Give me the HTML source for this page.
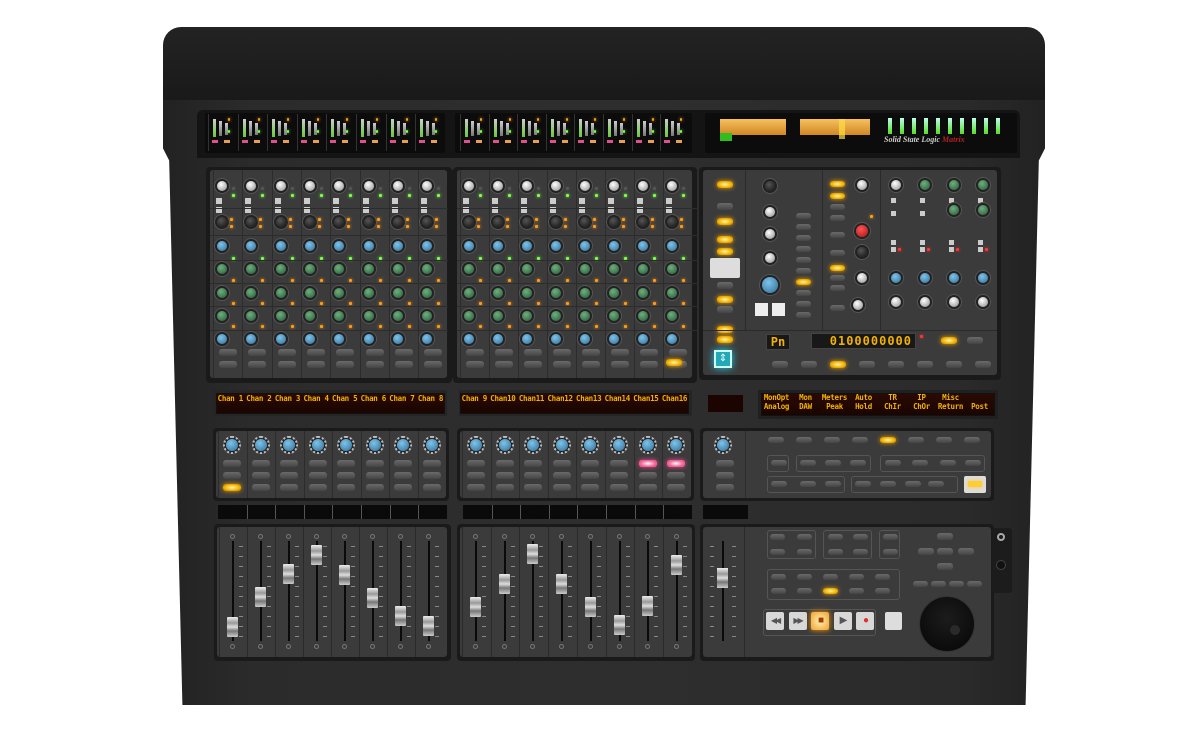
<!DOCTYPE html>
<html><head><meta charset="utf-8">
<style>
*{margin:0;padding:0;box-sizing:border-box}
body{width:1200px;height:741px;background:#fff;position:relative;overflow:hidden;font-family:"Liberation Sans",sans-serif}
.a{position:absolute}
#hood{left:163px;top:27px;width:882px;height:100px;background:linear-gradient(#232323,#1b1b1b 60%,#151515);border-radius:18px 18px 0 0}
#body{left:163px;top:100px;width:882px;height:605px;background:linear-gradient(90deg,#222,#2b2b2b 10%,#2e2e2e 50%,#2b2b2b 90%,#222);border-radius:0 0 8px 8px;clip-path:polygon(0 0,100% 0,100% 8%,99.3% 10%,97.8% 100%,2.2% 100%,0.7% 10%,0 8%)}
.panel{background:#1a1a1a;border-radius:4px}
.face{background:#3b3b3b;border-radius:3px}
.meterbox{background:#0c0c0c;border-radius:2px}
.disp{background:linear-gradient(#2a0a02,#1a0500);border:1px solid #111}
.dt{position:absolute;color:#f3b100;font-family:"DejaVu Sans Mono","Liberation Mono",monospace;font-size:7.5px;font-weight:bold;line-height:10px;white-space:nowrap;text-align:center;letter-spacing:-0.3px}
.seg{color:#f3b100;font-family:"DejaVu Sans Mono","Liberation Mono",monospace;font-weight:bold;font-size:12px;line-height:14px}
.logo{color:#ccc;font-family:"Liberation Serif",serif;font-style:italic;font-weight:bold;font-size:8px;white-space:nowrap}
</style></head><body>
<div id="hood" class="a"></div>
<div id="body" class="a"></div>
<div id="c"></div>
<script>
var c=document.getElementById('c'),h='';
function d(x,y,w,ht,st,cl,tx){h+='<div class="a '+(cl||'')+'" style="left:'+x+'px;top:'+y+'px;width:'+w+'px;height:'+ht+'px;'+(st||'')+'">'+(tx||'')+'</div>';}
function knob(x,y,r,col){d(x-r,y-r,2*r,2*r,'border-radius:50%;background:radial-gradient(circle at 40% 35%,'+col[0]+','+col[1]+');box-shadow:0 0 0 2px #222,0 0 0 3px #555');}
function led(x,y,col,w,ht){d(x,y,w||3,ht||3,'background:'+col+';box-shadow:0 0 3px '+col+';border-radius:1px');}
function btn(x,y,w,ht,lit){d(x,y,w,ht,'border-radius:3px;background:'+(lit?'radial-gradient(#fff6a0,#f0b000 60%,#b07000)':'linear-gradient(#6a6a6a,#444)')+';'+(lit?'box-shadow:0 0 5px #f0a000':''));}
function dt(x,y,w,t){h+='<div class="dt" style="left:'+x+'px;top:'+y+'px;width:'+w+'px">'+t+'</div>';}
var WK=['#fff','#888'],BK=['#555','#111'],BL=['#7ec3e8','#2d6d99'],GR=['#6fb07a','#22573a'],OR='#ff9a1a',GN='#7cff4a';
d(197,110,823,48,'background:#141414;border-radius:6px 6px 0 0');
d(205,113,240,40,'','meterbox');d(455,113,237,40,'','meterbox');d(705,113,312,40,'','meterbox');
for(var s=0;s<2;s++)for(var i=0;i<8;i++){var bx=(s?460:208)+i*(s?28.6:29.6);
 d(bx,114,1,37,'background:#333');
 for(var j=0;j<3;j++)d(bx+5+j*6,119+j*2,3,18-j*3,'background:linear-gradient(#ccc,'+(j==0?'#6c3':'#777')+')');
 led(bx+20,118,OR,2,3);led(bx+20,130,GN,2,3);
 d(bx+4,140,6,3,'background:#e0508a');d(bx+16,140,6,3,'background:#e8a050');}
d(720,119,66,16,'background:linear-gradient(#f6c060,#d08820);');d(800,119,70,16,'background:linear-gradient(#f6c060,#d08820);');
d(720,133,12,8,'background:#3b2');d(839,119,6,20,'background:#fd4;opacity:.7');
for(i=0;i<10;i++)d(888+i*12,118,4,16,'background:linear-gradient(#bfe,#5d2)');
d(884,135,120,12,'','logo','Solid State Logic <span style="color:#b02020">Matrix</span>');
d(206,167,246,216,'','panel');d(453,167,244,216,'','panel');d(699,167,302,213,'','panel');
d(210,170,237,208,'','face');d(457,170,235,208,'','face');d(703,170,294,205,'','face');
var ky=[186,222,246,269,293,316,339];
for(s=0;s<2;s++)for(i=0;i<8;i++){var x0=(s?460:213)+i*(s?29:29.3);
 d(x0,170,1,208,'background:#2c2c2c');
 var kc=[WK,BK,BL,GR,GR,GR,BL];
 for(j=0;j<7;j++)knob(x0+9,ky[j],5,kc[j]);
 d(x0+3,198,6,6,'background:#ccc');d(x0+3,207,6,6,'background:#ccc');
 led(x0+19,187,'#555');led(x0+19,194,GN);led(x0+17,218,OR);led(x0+17,225,OR);
 led(x0+19,257,GN);led(x0+19,279,OR);led(x0+19,302,OR);led(x0+19,325,OR);
 btn(x0+6,349,18,7);btn(x0+6,361,18,7);}
for(j=0;j<6;j++){d(210,[208,235,260,283,306,330][j],487,1,'background:#2c2c2c');}
d(448,170,9,208,'background:#1a1a1a');
btn(666,359,16,7,1);
d(745,170,1,160,'background:#2a2a2a');d(822,170,1,160,'background:#2a2a2a');d(880,170,1,160,'background:#2a2a2a');
var lit=[[717,181,1],[717,203,0],[717,218,1],[717,236,1],[717,248,1],[717,282,0],[717,296,1],[717,306,0],[717,326,1],[717,336,1]];
lit.forEach(function(b){btn(b[0],b[1],16,7,b[2]);});
d(710,258,30,20,'background:#ddd;border-radius:2px');
d(714,350,18,18,'background:#2ab;box-shadow:0 0 8px #2ce;border:2px solid #cfe;color:#fff;font-size:10px;text-align:center;line-height:14px','','⇕');
knob(770,186,5,BK);knob(770,212,5,WK);knob(770,234,5,WK);knob(770,258,5,WK);knob(770,285,8,BL);
d(755,303,13,13,'background:#eee');d(772,303,13,13,'background:#eee');
for(i=0;i<10;i++)btn(796,213+i*11,15,6,i==6);
btn(830,181,15,6,1);btn(830,193,15,6,1);btn(830,204,15,6);btn(830,215,15,6);btn(830,232,15,6);btn(830,250,15,6);btn(830,265,15,6,1);btn(830,275,15,6);btn(830,285,15,6);btn(830,305,15,6);
knob(862,185,5,WK);knob(862,231,6,['#f55','#a11']);knob(862,252,5,BK);knob(862,278,5,WK);knob(858,305,5,WK);
led(870,215,OR);
for(i=0;i<4;i++){var rx=888+i*29;
 knob(rx+8,185,5,i<1?WK:GR);d(rx+3,198,5,5,'background:#ccc');d(rx+3,211,5,5,'background:#ccc');
 if(i>1)knob(rx+8,210,5,GR);
 d(rx+3,240,5,5,'background:#ccc');d(rx+3,247,5,5,'background:#ccc');led(rx+10,248,'#f33');
 knob(rx+8,278,5,BL);knob(rx+8,302,5,WK);}
d(703,330,294,1,'background:#2a2a2a');
d(766,334,24,16,'background:#181818;border:1px solid #444;text-align:center','seg','Pn');
d(811,333,105,16,'background:#181818;border:1px solid #444;text-align:right;padding-right:3px;letter-spacing:1px','seg','0100000000');
led(920,335,'#f33');btn(941,337,16,7,1);btn(967,337,16,7);
for(i=0;i<8;i++)btn(772+i*29,361,16,7,i==2);
// displays
d(213,390,234,26,'background:#252525;border-radius:2px');d(459,390,233,26,'background:#252525');
d(216,393,229,21,'','disp');d(460,393,229,21,'','disp');
for(i=0;i<8;i++){dt(216+i*28.6,394,28.6,'Chan '+(i+1));dt(460+i*28.6,394,28.6,i==0?'Chan 9':'Chan'+(i+9));}
d(708,395,35,17,'background:#1c0500');
d(758,390,240,29,'background:#202020');
d(761,393,234,23,'','disp');
var r1=['MonOpt','Mon','Meters','Auto','TR','IP','Misc',''],r2=['Analog','DAW','Peak','Hold','ChIr','ChOr','Return','Post'];
for(i=0;i<8;i++){dt(762+i*29,393,29,r1[i]);dt(762+i*29,402,29,r2[i]);}
d(213,428,236,73,'','panel');d(457,428,237,73,'','panel');d(700,428,294,73,'','panel');
d(216,431,230,67,'','face');d(460,431,231,67,'','face');d(703,431,288,67,'','face');
for(s=0;s<2;s++)for(i=0;i<8;i++){x0=(s?462:218)+i*(s?28.6:28.5);
 d(x0,431,1,67,'background:#2c2c2c');
 knob(x0+14,445,6,BL);
 d(x0+14-9,436,18,18,'border-radius:50%;border:2px dotted #ddd;opacity:.8');
 var p=(s&&i>5);btn(x0+5,460,18,7,0);
 if(p)d(x0+5,460,18,7,'background:radial-gradient(#fff,#f06090 60%);box-shadow:0 0 5px #f49;border-radius:3px');
 btn(x0+5,472,18,7);btn(x0+5,484,18,7,s==0&&i==0);}
knob(723,445,6,BL);d(714,436,18,18,'border-radius:50%;border:2px dotted #ddd;opacity:.8');
btn(716,460,18,7);btn(716,472,18,7);btn(716,484,18,7);
d(745,431,1,67,'background:#2c2c2c');
for(i=0;i<8;i++)btn(768+i*28,437,16,6,i==4);
d(767,455,22,17,'border:1px solid #555;border-radius:3px');d(796,455,75,17,'border:1px solid #555;border-radius:3px');d(880,455,105,17,'border:1px solid #555;border-radius:3px');
d(767,476,78,17,'border:1px solid #555;border-radius:3px');d(851,476,107,17,'border:1px solid #555;border-radius:3px');
[771,800,825,850,885,912,940,965].forEach(function(x){btn(x,460,16,6)});
[771,800,825,855,880,905,928].forEach(function(x){btn(x,481,16,6)});
d(964,476,22,17,'background:#ddd;border-radius:2px');d(968,481,14,6,'background:#fc3;box-shadow:0 0 4px #fc3');
d(218,505,229,14,'background:#0a0a0a');d(463,505,229,14,'background:#0a0a0a');d(703,505,45,14,'background:#0a0a0a');
for(i=1;i<8;i++){d(218+i*28.6,505,1,14,'background:#555');d(463+i*28.6,505,1,14,'background:#555');}
d(214,524,237,137,'','panel');d(457,524,238,137,'','panel');d(700,524,294,137,'','panel');
d(217,527,230,130,'','face');d(460,527,232,130,'','face');d(703,527,288,130,'','face');
var fl=[627,597,574,555,575,598,616,626],fm=[607,584,554,584,607,625,606,565];
for(s=0;s<2;s++)for(i=0;i<8;i++){x0=(s?462:219)+i*(s?28.7:28);
 d(x0,527,1,130,'background:#2a2a2a');
 d(x0+13,541,2,100,'background:#0a0a0a');
 d(x0+11,534,5,5,'border-radius:50%;border:1px solid #777');d(x0+11,644,5,5,'border-radius:50%;border:1px solid #777');
 for(j=0;j<10;j++)d(x0+20,546+j*10,4,1,'background:#888');
 var fy=(s?fm:fl)[i];d(x0+8,fy-10,11,20,'background:linear-gradient(#eee,#999 30%,#ddd 50%,#777 70%,#ccc);border-radius:1px');}
d(722,541,2,100,'background:#0a0a0a');d(717,568,11,20,'background:linear-gradient(#eee,#999 30%,#ddd 50%,#777 70%,#ccc)');
for(j=0;j<10;j++){d(710,546+j*10,4,1,'background:#888');d(732,546+j*10,4,1,'background:#888');}
d(744,527,1,130,'background:#2a2a2a');
d(767,530,49,29,'border:1px solid #555;border-radius:3px');d(823,530,49,29,'border:1px solid #555;border-radius:3px');d(879,530,21,29,'border:1px solid #555;border-radius:3px');
d(767,569,133,31,'border:1px solid #555;border-radius:3px');
[[770,534],[797,534],[770,549],[797,549],[828,534],[853,534],[828,549],[853,549],[883,534],[883,549]].forEach(function(b){btn(b[0],b[1],15,6)});
for(i=0;i<5;i++){btn(771+i*26,574,15,6);btn(771+i*26,588,15,6,i==2);}
d(763,609,113,27,'border:1px solid #555;border-radius:3px');
var tr=['◀◀','▶▶','■','▶','●'];
for(i=0;i<5;i++)d(766+i*22.5,612,18,18,'background:'+(i==2?'radial-gradient(#fff1b0,#f0a030)':'#d8d8d8')+';border-radius:2px;color:'+(i==4?'#e03030':i==2?'#a04000':'#555')+';font-size:'+(i<2?'8':'10')+'px;text-align:center;line-height:18px;letter-spacing:-2px;'+(i==2?'box-shadow:0 0 6px #f90':''),'',tr[i]);
d(885,612,17,18,'background:#ddd;border-radius:2px');
[[937,533],[918,548],[937,548],[958,548],[937,563]].forEach(function(b){btn(b[0],b[1],16,7)});
for(i=0;i<4;i++)btn(913+i*18,581,15,6);
d(920,597,54,54,'border-radius:50%;background:radial-gradient(circle at 50% 40%,#1c1c1c,#050505);box-shadow:0 0 0 1px #333');
d(950,625,10,10,'border-radius:50%;background:#2a2a2a');
d(992,528,20,65,'background:#1c1c1c;border-radius:3px');d(997,533,8,8,'border-radius:50%;border:2px solid #aaa');d(996,560,10,10,'border-radius:50%;background:#111;border:1px solid #444');
c.innerHTML=h;
</script>
</body></html>
